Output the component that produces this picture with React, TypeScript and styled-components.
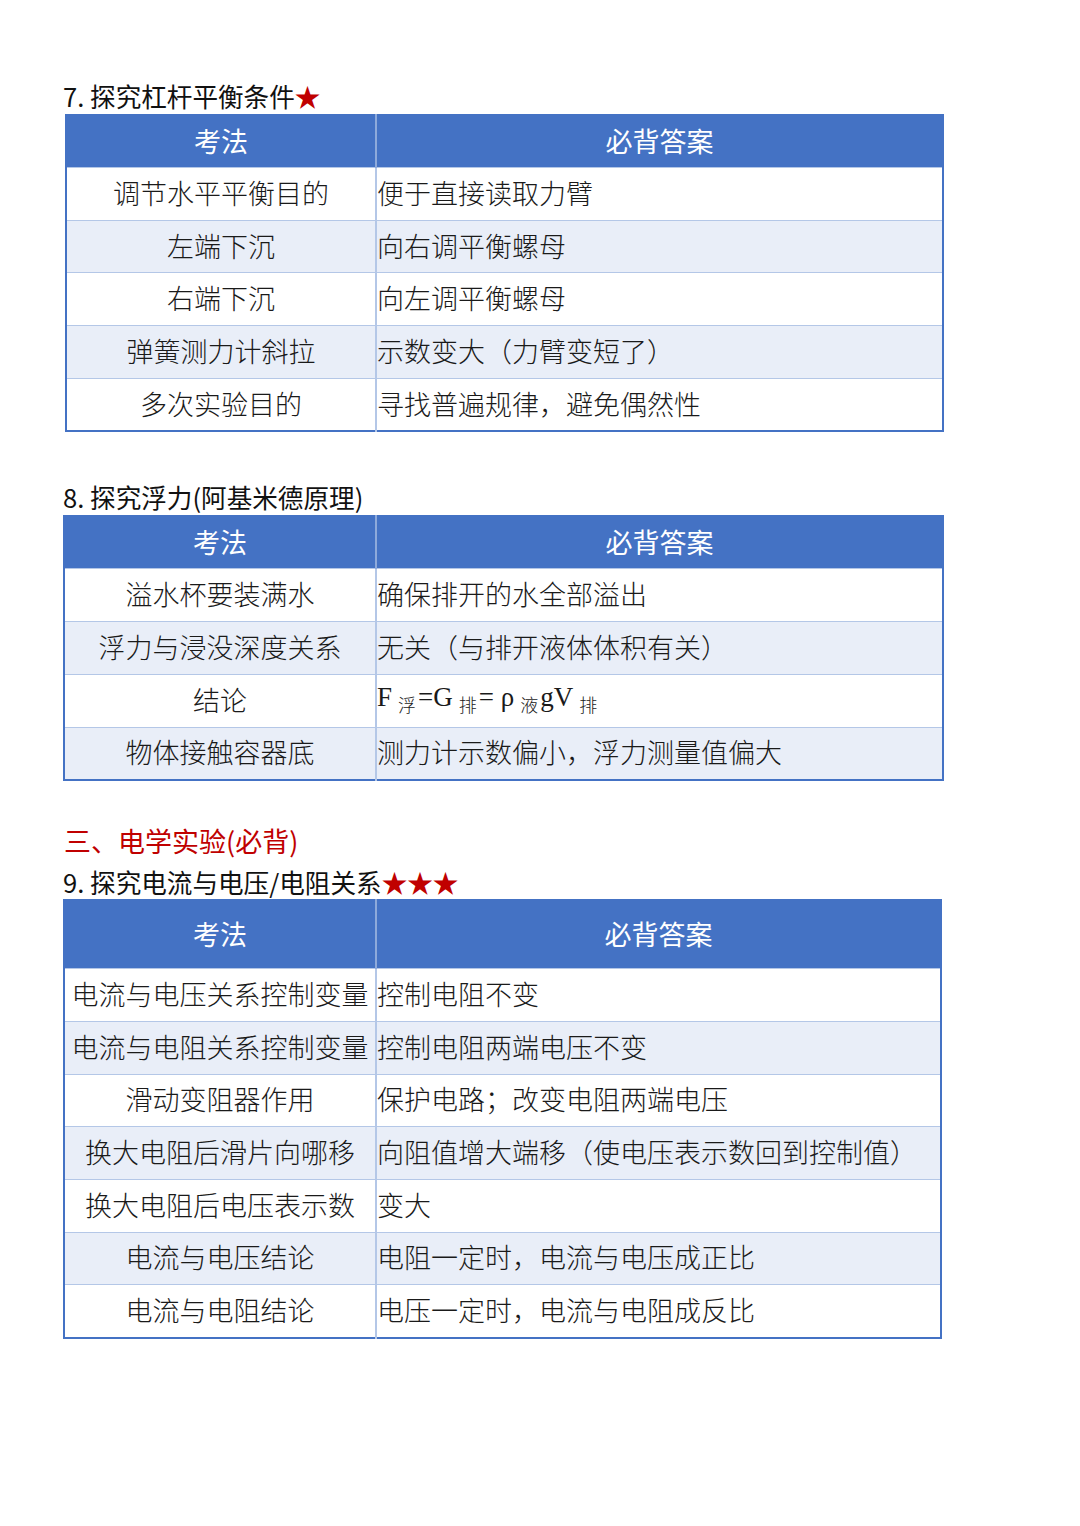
import * as React from 'react';
import styled, {createGlobalStyle} from 'styled-components';

const $HEAD = '#4472c4';
const $STRIPE = '#e9eef8';
const $LINE = '#b4c7e7';
const $RED = '#c00000';

const GlobalStyle = createGlobalStyle`
  html, body {
    margin: 0;
    padding: 0;
    background: #fff;
  }
`;

const Page = styled.div`
  width: 1080px;
  min-height: 1526px;
  box-sizing: border-box;
  padding: 82px 0 0 63px;
  font-family: "Noto Sans CJK SC", sans-serif;
  color: #111;
`;

const Section = styled.section<{gap: number;}>`
  margin-bottom: ${({gap}) => gap}px;
`;

const Heading = styled.h2`
  margin: 0 0 13px 1px;
  font-size: 27px;
  font-weight: 400;
  line-height: 28px;
  color: ${$RED};
`;

const Title = styled.h3<{after: number;}>`
  margin: 0 0 ${({after}) => after}px 0;
  font-size: 25.6px;
  font-weight: 400;
  line-height: 28px;
  color: #111;
`;

const Star = styled.span`
  color: ${$RED};
`;

const Table = styled.table<{width: number; left: number;}>`
  width: ${({width}) => width}px;
  margin-left: ${({left}) => left}px;
  border-collapse: collapse;
  table-layout: fixed;
  border-bottom: 2px solid ${$HEAD};
  border-left: 2px solid ${$HEAD};
  border-right: 2px solid ${$HEAD};
`;

const Th = styled.th<{height: number;}>`
  height: ${({height}) => height}px;
  padding: 0;
  background: ${$HEAD};
  color: #fff;
  font-size: 27px;
  font-weight: 400;
  text-align: center;
  border-left: 2px solid #8eaadb;
  &:first-child {
    border-left: none;
  }
`;

const Tr = styled.tr<{striped: boolean;}>`
  background: ${({striped}) => striped ? $STRIPE : '#fff'};
`;

const Td = styled.td<{align: 'center' | 'left';}>`
  height: 49.7px;
  padding: 2px 0 0 0;
  border-top: 1px solid ${$LINE};
  border-left: 2px solid ${$LINE};
  text-align: ${({align}) => align};
  font-family: "Liberation Serif", "Noto Sans CJK SC", serif;
  font-size: 27px;
  font-weight: 300;
  line-height: 30px;
  color: #1a1a1a;
  white-space: nowrap;
  &:first-child {
    border-left: none;
  }
`;

const Sub = styled.sub`
  font-size: 18px;
  vertical-align: -6px;
  margin: 0 2px 0 6px;
`;

interface IRow {
  method: React.ReactNode;
  answer: React.ReactNode;
}

const lever: IRow[] = [
  {method: '调节水平平衡目的', answer: '便于直接读取力臂'},
  {method: '左端下沉', answer: '向右调平衡螺母'},
  {method: '右端下沉', answer: '向左调平衡螺母'},
  {method: '弹簧测力计斜拉', answer: '示数变大（力臂变短了）'},
  {method: '多次实验目的', answer: '寻找普遍规律，避免偶然性'}
];

const buoyancy: IRow[] = [
  {method: '溢水杯要装满水', answer: '确保排开的水全部溢出'},
  {method: '浮力与浸没深度关系', answer: '无关（与排开液体体积有关）'},
  {
    method: '结论',
    answer: (
      <>F<Sub>浮</Sub>=G<Sub>排</Sub>= ρ<Sub>液</Sub>gV<Sub>排</Sub></>
    )
  },
  {method: '物体接触容器底', answer: '测力计示数偏小，浮力测量值偏大'}
];

const circuit: IRow[] = [
  {method: '电流与电压关系控制变量', answer: '控制电阻不变'},
  {method: '电流与电阻关系控制变量', answer: '控制电阻两端电压不变'},
  {method: '滑动变阻器作用', answer: '保护电路；改变电阻两端电压'},
  {method: '换大电阻后滑片向哪移', answer: '向阻值增大端移（使电压表示数回到控制值）'},
  {method: '换大电阻后电压表示数', answer: '变大'},
  {method: '电流与电压结论', answer: '电阻一定时，电流与电压成正比'},
  {method: '电流与电阻结论', answer: '电压一定时，电流与电阻成反比'}
];

const AnswerTable: React.FC<{
  rows: IRow[];
  width: number;
  left: number;
  firstCol: number;
  headHeight: number;
}> = ({rows, width, left, firstCol, headHeight}) => (
  <Table width={width} left={left}>
    <colgroup>
      <col style={{width: firstCol}} />
      <col />
    </colgroup>
    <thead>
      <tr>
        <Th height={headHeight}>考法</Th>
        <Th height={headHeight}>必背答案</Th>
      </tr>
    </thead>
    <tbody>
      {rows.map((row, i) => (
        <Tr key={i} striped={i % 2 === 1}>
          <Td align="center">{row.method}</Td>
          <Td align="left">{row.answer}</Td>
        </Tr>
      ))}
    </tbody>
  </Table>
);

const App: React.FC = () => (
  <>
    <GlobalStyle />
    <Page>
      <Section gap={51}>
        <Title after={4}>7. 探究杠杆平衡条件<Star>★</Star></Title>
        <AnswerTable rows={lever} width={879} left={2} firstCol={310} headHeight={53} />
      </Section>
      <Section gap={46}>
        <Title after={4}>8. 探究浮力(阿基米德原理)</Title>
        <AnswerTable rows={buoyancy} width={881} left={0} firstCol={312} headHeight={53} />
      </Section>
      <Section gap={0}>
        <Heading>三、电学实验(必背)</Heading>
        <Title after={3}>9. 探究电流与电压/电阻关系<Star>★★★</Star></Title>
        <AnswerTable rows={circuit} width={879} left={0} firstCol={312} headHeight={69} />
      </Section>
    </Page>
  </>
);

export default App;
